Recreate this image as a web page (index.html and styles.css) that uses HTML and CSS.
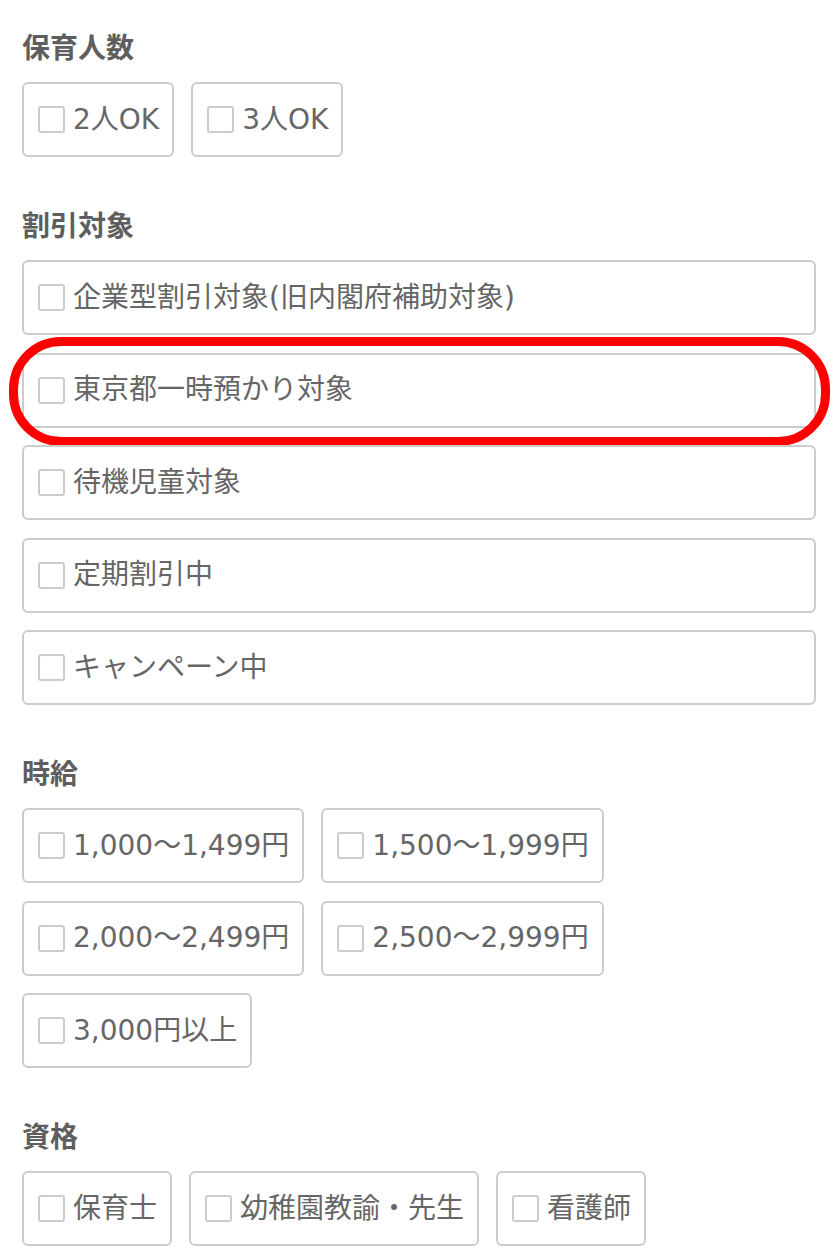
FILE: index.html
```html
<!DOCTYPE html>
<html lang="ja">
<head>
    <meta charset="UTF-8">
    <meta name="viewport" content="width=device-width, initial-scale=1.0">
    <title>絞り込み検索</title>
    <link rel="stylesheet" href="styles.css">
</head>
<body>
    <div class="filters">
        <section class="filter-group">
            <h2>保育人数</h2>
            <div class="options">
                <label class="option"><input type="checkbox"><span>2人OK</span></label>
                <label class="option"><input type="checkbox"><span>3人OK</span></label>
            </div>
        </section>

        <section class="filter-group">
            <h2>割引対象</h2>
            <div class="options options-list">
                <label class="option"><input type="checkbox"><span>企業型割引対象(旧内閣府補助対象)</span></label>
                <label class="option highlighted"><input type="checkbox"><span>東京都一時預かり対象</span></label>
                <label class="option"><input type="checkbox"><span>待機児童対象</span></label>
                <label class="option"><input type="checkbox"><span>定期割引中</span></label>
                <label class="option"><input type="checkbox"><span>キャンペーン中</span></label>
            </div>
        </section>

        <section class="filter-group">
            <h2>時給</h2>
            <div class="options options-wage">
                <label class="option"><input type="checkbox"><span>1,000〜1,499円</span></label>
                <label class="option"><input type="checkbox"><span>1,500〜1,999円</span></label>
                <label class="option"><input type="checkbox"><span>2,000〜2,499円</span></label>
                <label class="option"><input type="checkbox"><span>2,500〜2,999円</span></label>
                <label class="option"><input type="checkbox"><span>3,000円以上</span></label>
            </div>
        </section>

        <section class="filter-group">
            <h2>資格</h2>
            <div class="options">
                <label class="option"><input type="checkbox"><span>保育士</span></label>
                <label class="option"><input type="checkbox"><span>幼稚園教諭・先生</span></label>
                <label class="option"><input type="checkbox"><span>看護師</span></label>
            </div>
        </section>
    </div>
</body>
</html>
```

FILE: styles.css
```css
body {
    margin: 0;
    padding: 0;
    background-color: #fff;
    font-family: "DejaVu Sans", "Noto Sans CJK JP", sans-serif;
    color: #666;
    overflow: hidden;
}
.filters {
    padding: 31px 21px 0 22px;
}
.filter-group {
    margin-bottom: 52px;
}
.filter-group h2 {
    margin: 0 0 15px;
    font-size: 28px;
    line-height: 36px;
    font-weight: bold;
    color: #5e5e5e;
}
.options {
    display: flex;
    flex-wrap: wrap;
    gap: 17.5px 17px;
}
.options-list {
    flex-direction: column;
}
.options-wage {
    width: 600px;
}
.option {
    position: relative;
    display: flex;
    align-items: center;
    height: 75px;
    box-sizing: border-box;
    padding: 0 13px 0 14px;
    border: 2px solid #ccc;
    border-radius: 6px;
    background-color: #fff;
    font-size: 28px;
    cursor: pointer;
}
.option input {
    appearance: none;
    -webkit-appearance: none;
    flex: none;
    width: 27px;
    height: 27px;
    margin: 0 8px 0 0;
    box-sizing: border-box;
    border: 2px solid #ccc;
    border-radius: 3px;
    background-color: #fff;
}
.option span {
    white-space: nowrap;
    line-height: 1;
}
.highlighted::after {
    content: "";
    position: absolute;
    left: -15px;
    right: -16px;
    top: -18px;
    bottom: -20px;
    border: 9px solid #ff0000;
    border-radius: 52px;
    pointer-events: none;
}
```
